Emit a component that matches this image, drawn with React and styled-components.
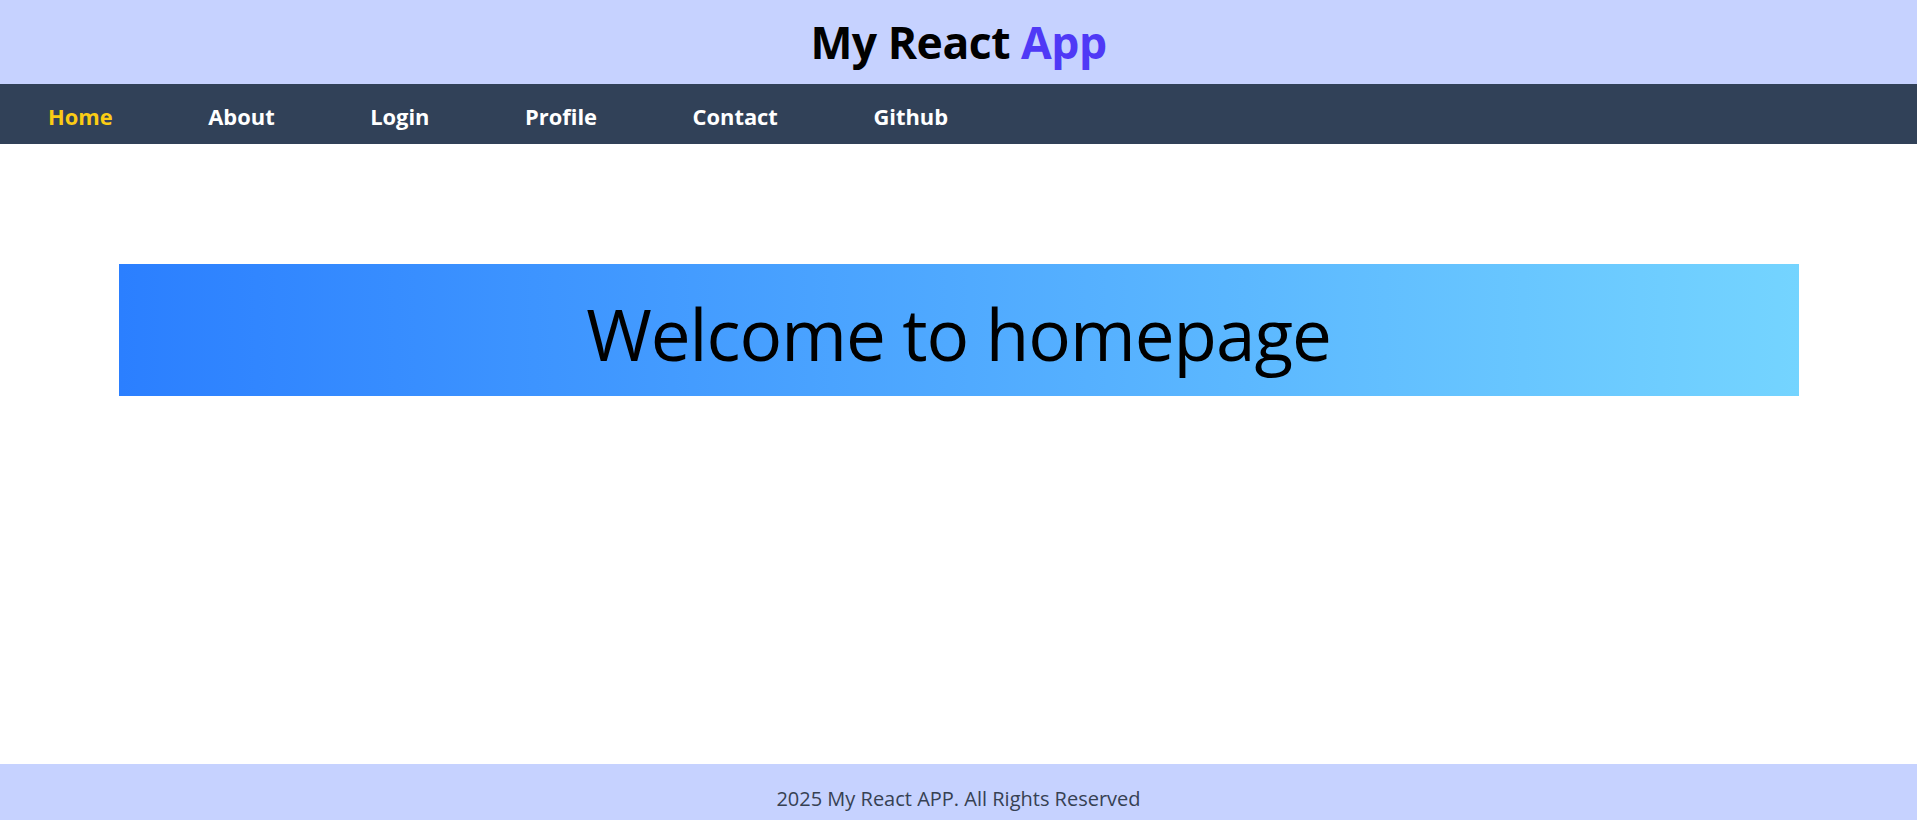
import React from 'react';
import styled, { createGlobalStyle } from 'styled-components';

const links = ['Home', 'About', 'Login', 'Profile', 'Contact', 'Github'];

export default function App() {
    return (
        <>
            <GlobalStyle />
            <Page>
                <Header>
                    <Title>
                        My React <Accent>App</Accent>
                    </Title>
                </Header>
                <Nav>
                    {links.map((link, i) => (
                        <NavLink key={link} href="#" $active={i === 0}>
                            {link}
                        </NavLink>
                    ))}
                </Nav>
                <Main>
                    <Banner>
                        <BannerText>Welcome to homepage</BannerText>
                    </Banner>
                </Main>
                <Footer>2025 My React APP. All Rights Reserved</Footer>
            </Page>
        </>
    );
}

// ---------------------------STYLES-------------------------------------------//

const GlobalStyle = createGlobalStyle`
    html, body {
        margin: 0;
        padding: 0;
    }
    body {
        font-family: 'Open Sans', 'Noto Sans', sans-serif;
        background: #ffffff;
    }
    * {
        box-sizing: border-box;
    }
`;

const Page = styled.div`
    min-height: 100vh;
    display: flex;
    flex-direction: column;
`;

const Header = styled.header`
    height: 84px;
    background: #c6d2ff;
    display: flex;
    align-items: center;
    justify-content: center;
`;

const Title = styled.h1`
    margin: 0;
    font-size: 44.5px;
    font-weight: 700;
    line-height: 1;
    color: #000;
    letter-spacing: -0.5px;
`;

const Accent = styled.span`
    color: #4f39f6;
`;

const Nav = styled.nav`
    height: 60px;
    background: #314158;
    display: flex;
    align-items: center;
    gap: 95.5px;
    padding: 5px 48px 0;
`;

const NavLink = styled.a`
    font-size: 21.9px;
    font-weight: 700;
    line-height: 32px;
    text-decoration: none;
    color: ${(p) => (p.$active ? '#facc15' : '#ffffff')};
`;

const Main = styled.main`
    flex: 1;
    padding-top: 120px;
`;

const Banner = styled.section`
    width: calc(100% - 237px);
    height: 132px;
    margin: 0 auto;
    padding-top: 6px;
    display: flex;
    align-items: center;
    justify-content: center;
    background: linear-gradient(to right, #2b7fff, #74d4ff);
`;

const BannerText = styled.h2`
    margin: 0;
    font-size: 71px;
    font-weight: 400;
    line-height: 1;
    color: #000;
    letter-spacing: -1px;
`;

const Footer = styled.footer`
    height: 56px;
    background: #c6d2ff;
    color: #364153;
    font-size: 20px;
    display: flex;
    align-items: center;
    justify-content: center;
    padding-top: 12px;
`;
